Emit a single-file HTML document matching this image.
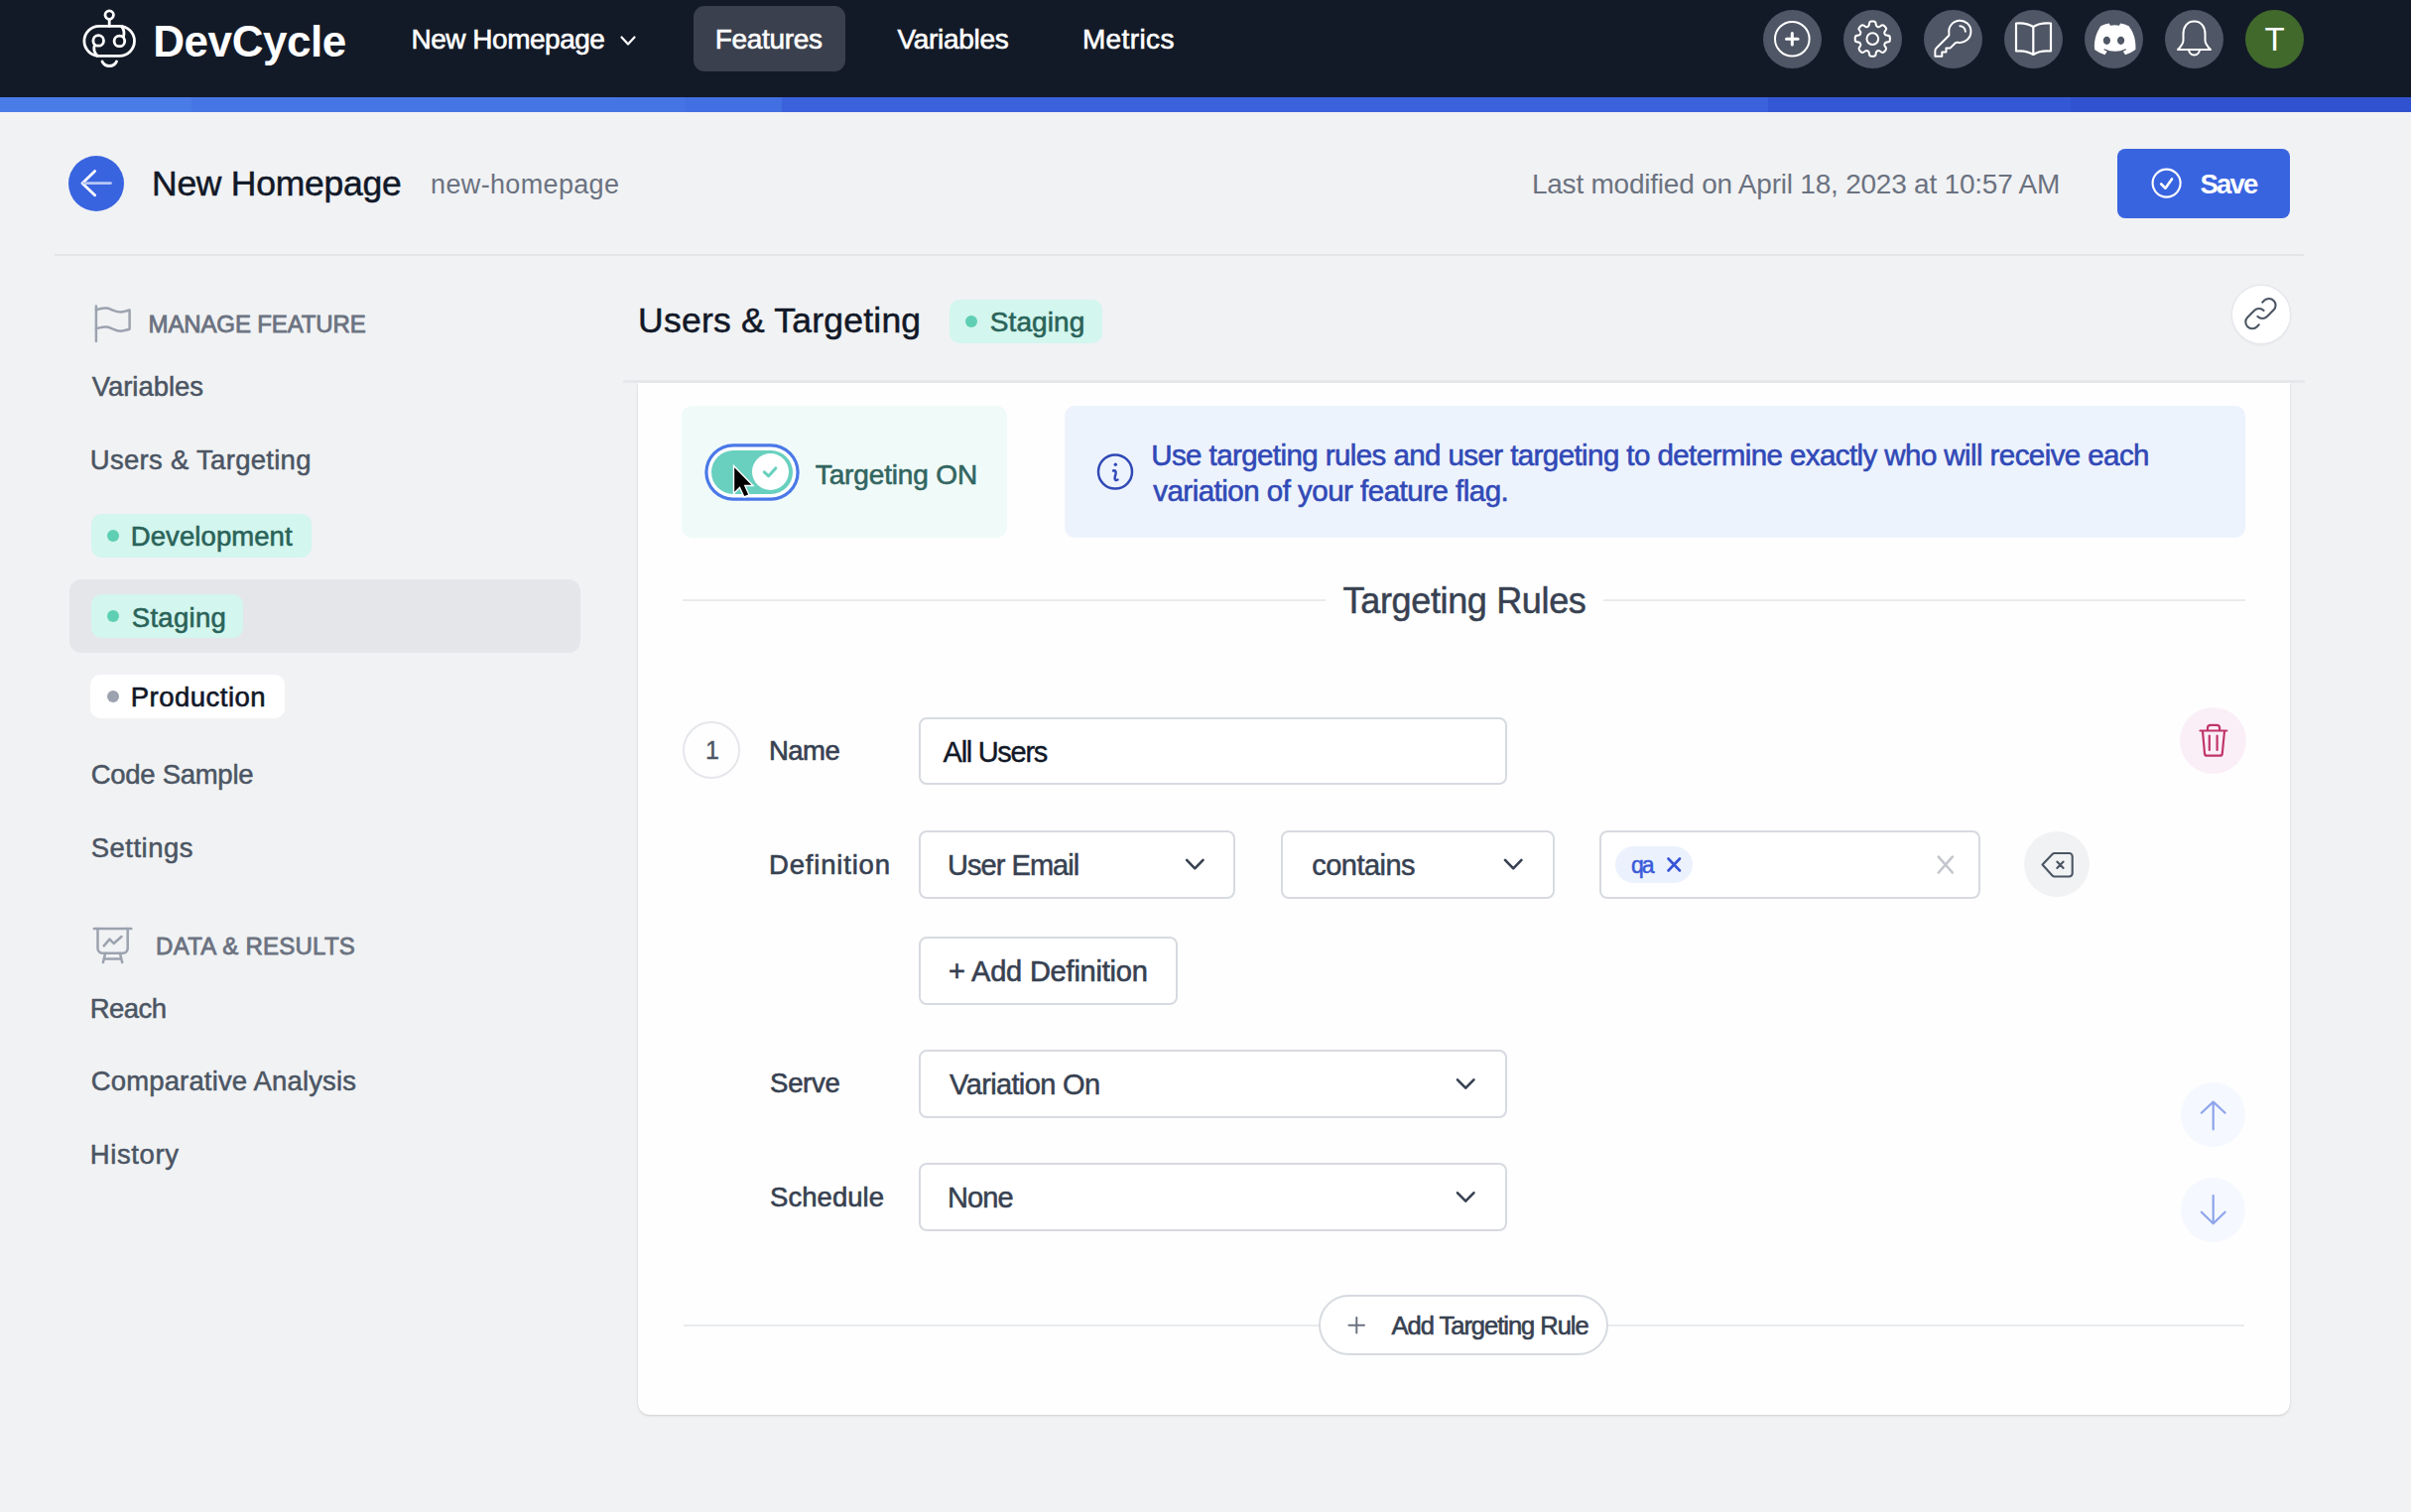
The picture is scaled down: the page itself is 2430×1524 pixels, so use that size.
<!DOCTYPE html>
<html><head><meta charset="utf-8"><style>
html,body{margin:0;padding:0;}
body{width:2430px;height:1524px;background:#f1f2f4;position:relative;overflow:hidden;font-family:"Liberation Sans",sans-serif;}
.a{position:absolute;box-sizing:border-box;}
.t{position:absolute;white-space:nowrap;}
svg{position:absolute;overflow:visible;}
</style></head><body>
<!-- NAV -->
<div class="a" style="left:0;top:0;width:2430px;height:98px;background:#131a27"></div>
<div class="a" style="left:0;top:98px;width:2430px;height:15px;background:linear-gradient(90deg,#4a7ce8 0,#4a7ce8 193px,#4676e5 193px,#4575e4 690px,#4270e2 690px,#4270e2 788px,#3b61dc 788px,#3b61dc 1782px,#3458d5 1782px,#3458d5 2087px,#3152d0 2087px)"></div>
<div class="a" style="left:699px;top:6px;width:153px;height:66px;border-radius:11px;background:#3a404d"></div>
<div class="a" style="left:1777px;top:9.5px;width:59px;height:59px;border-radius:50%;background:#4f5665"></div>
<div class="a" style="left:1858px;top:9.5px;width:59px;height:59px;border-radius:50%;background:#4f5665"></div>
<div class="a" style="left:1939px;top:9.5px;width:59px;height:59px;border-radius:50%;background:#4f5665"></div>
<div class="a" style="left:2020px;top:9.5px;width:59px;height:59px;border-radius:50%;background:#4f5665"></div>
<div class="a" style="left:2101px;top:9.5px;width:59px;height:59px;border-radius:50%;background:#4f5665"></div>
<div class="a" style="left:2182px;top:9.5px;width:59px;height:59px;border-radius:50%;background:#4f5665"></div>
<div class="a" style="left:2263px;top:9.5px;width:59px;height:59px;border-radius:50%;background:#41692c"></div>

<!-- HEADER -->
<div class="a" style="left:69px;top:156.6px;width:56px;height:56px;border-radius:50%;background:#3964e0"></div>
<div class="a" style="left:2134px;top:149.5px;width:174px;height:70px;border-radius:8px;background:#3964e0"></div>
<div class="a" style="left:55px;top:256px;width:2267px;height:2px;background:#e3e5e9"></div>

<!-- SIDEBAR -->
<div class="a" style="left:91.6px;top:518px;width:222.4px;height:44px;border-radius:10px;background:#d3f6ee"></div>
<div class="a" style="left:107.5px;top:534px;width:12px;height:12px;border-radius:50%;background:#5fcfb4"></div>
<div class="a" style="left:69.8px;top:584.3px;width:515px;height:74px;border-radius:12px;background:#e4e6ea"></div>
<div class="a" style="left:91.6px;top:599px;width:153.4px;height:44px;border-radius:10px;background:#d3f6ee"></div>
<div class="a" style="left:107.5px;top:615px;width:12px;height:12px;border-radius:50%;background:#5fcfb4"></div>
<div class="a" style="left:90.7px;top:680px;width:196.3px;height:44px;border-radius:10px;background:#ffffff"></div>
<div class="a" style="left:107.5px;top:696px;width:12px;height:12px;border-radius:50%;background:#9ca3af"></div>

<!-- MAIN HEADER -->
<div class="a" style="left:957px;top:302px;width:154px;height:43.5px;border-radius:10px;background:#d3f6ee"></div>
<div class="a" style="left:973px;top:318px;width:12px;height:12px;border-radius:50%;background:#5fcfb4"></div>
<div class="a" style="left:2250px;top:288px;width:58px;height:58px;border-radius:50%;background:#fff;box-shadow:0 0 0 1.5px #e6e8ec,0 2px 3px rgba(0,0,0,0.05)"></div>

<!-- CARD -->
<div class="a" style="left:628px;top:383px;width:1695px;height:3px;background:#e7e8eb;filter:blur(0.6px)"></div>
<div class="a" style="left:643px;top:386px;width:1665px;height:1040px;border-radius:0 0 12px 12px;background:#fefefe;box-shadow:0 1px 3px rgba(0,0,0,0.10),0 1px 2px rgba(0,0,0,0.06)"></div>

<div class="a" style="left:687.4px;top:409.3px;width:327.2px;height:132.7px;border-radius:10px;background:#f0fbf9"></div>
<div class="a" style="left:1072.9px;top:409.4px;width:1190.6px;height:132.2px;border-radius:10px;background:#edf3fd"></div>
<!-- toggle -->
<div class="a" style="left:716.9px;top:453.5px;width:82px;height:44.7px;border-radius:23px;background:#69d0bf;box-shadow:0 0 0 3.5px #fff,0 0 0 6.7px #4a78e8"></div>
<div class="a" style="left:757.7px;top:457.2px;width:37px;height:37px;border-radius:50%;background:#fff"></div>

<div class="a" style="left:688px;top:603.6px;width:648px;height:2px;background:#e9ebee"></div>
<div class="a" style="left:1615.6px;top:603.6px;width:647px;height:2px;background:#e9ebee"></div>

<!-- rule -->
<div class="a" style="left:688px;top:727px;width:58px;height:58px;border-radius:50%;border:2px solid #e5e7eb"></div>
<div class="a" style="left:925.8px;top:723.1px;width:593.5px;height:68.4px;border-radius:8px;border:2px solid #d7dae0;background:#fff"></div>
<div class="a" style="left:925.8px;top:837.4px;width:319.5px;height:68.3px;border-radius:8px;border:2px solid #d7dae0;background:#fff"></div>
<div class="a" style="left:1291px;top:837.2px;width:276px;height:69px;border-radius:8px;border:2px solid #d7dae0;background:#fff"></div>
<div class="a" style="left:1612px;top:837.2px;width:383.5px;height:69px;border-radius:8px;border:2px solid #d7dae0;background:#fff"></div>
<div class="a" style="left:1628.2px;top:853px;width:78.1px;height:36.7px;border-radius:19px;background:#ebf1fd"></div>
<div class="a" style="left:2040.3px;top:838.3px;width:66px;height:66px;border-radius:50%;background:#f1f2f4"></div>
<div class="a" style="left:2197.3px;top:712.9px;width:67px;height:67px;border-radius:50%;background:#fbeff7"></div>
<div class="a" style="left:925.8px;top:943.8px;width:261.2px;height:69px;border-radius:8px;border:2px solid #d7dae0;background:#fff"></div>
<div class="a" style="left:925.8px;top:1058px;width:593.5px;height:69px;border-radius:8px;border:2px solid #d7dae0;background:#fff"></div>
<div class="a" style="left:925.8px;top:1172.2px;width:593.5px;height:69px;border-radius:8px;border:2px solid #d7dae0;background:#fff"></div>
<div class="a" style="left:2198.3px;top:1090.7px;width:65px;height:65px;border-radius:50%;background:#f5f8fe"></div>
<div class="a" style="left:2198.3px;top:1187.1px;width:65px;height:65px;border-radius:50%;background:#f5f8fe"></div>
<div class="a" style="left:689px;top:1335px;width:1573px;height:2px;background:#e9ebee"></div>
<div class="a" style="left:1329.4px;top:1305px;width:292px;height:61.3px;border-radius:31px;border:2px solid #d7dae0;background:#fff"></div>

<!-- ICONS overlay -->
<svg style="left:0;top:0" width="2430" height="1524" viewBox="0 0 2430 1524" fill="none" stroke-linecap="round" stroke-linejoin="round">
 <!-- logo -->
 <g stroke="#fff" stroke-width="2.8">
  <circle cx="110.2" cy="15.1" r="4.2"/>
  <line x1="110.2" y1="19.5" x2="110.2" y2="26.3"/>
  <rect x="84.9" y="26.3" width="50.6" height="30" rx="15"/>
  <circle cx="99.2" cy="40.9" r="5.3"/>
  <circle cx="120.4" cy="41.4" r="5.3"/>
  <path d="M95.5 45 C 94 49, 95 53, 98 56.3"/>
  <path d="M124.5 37 C 125.5 33, 125 29.5, 122.5 26.5"/>
  <path d="M103 62 C 106 68, 114.5 68, 117.5 62"/>
 </g>
 <!-- nav chevron -->
 <path d="M626.5 37.5 L633 44.5 L639.5 37.5" stroke="#fff" stroke-width="2.2"/>
 <!-- plus circle -->
 <g stroke="#fff" stroke-width="2">
  <circle cx="1806.3" cy="39.2" r="17.3"/>
  <path d="M1806.3 33.4 V45 M1800.5 39.2 H1812.1" stroke-width="3"/>
 </g>
 <!-- gear -->
 <g stroke="#fff" stroke-width="1.05" transform="translate(1887.3 39.1) scale(1.95) translate(-12 -12)">
  <path d="M10.343 3.94c.09-.542.56-.94 1.11-.94h1.093c.55 0 1.02.398 1.11.94l.149.894c.07.424.384.764.78.93.398.164.855.142 1.205-.108l.737-.527a1.125 1.125 0 0 1 1.45.12l.773.774c.39.389.44 1.002.12 1.45l-.527.737c-.25.35-.272.806-.107 1.204.165.397.505.71.93.78l.893.15c.543.09.94.559.94 1.109v1.094c0 .55-.397 1.02-.94 1.11l-.894.149c-.424.07-.764.383-.929.78-.165.398-.143.854.107 1.204l.527.738c.32.447.269 1.06-.12 1.45l-.774.773a1.125 1.125 0 0 1-1.449.12l-.738-.527c-.35-.25-.806-.272-1.203-.107-.398.165-.71.505-.781.929l-.149.894c-.09.542-.56.94-1.11.94h-1.094c-.55 0-1.019-.398-1.11-.94l-.148-.894c-.071-.424-.384-.764-.781-.93-.398-.164-.854-.142-1.204.108l-.738.527c-.447.32-1.06.269-1.45-.12l-.773-.774a1.125 1.125 0 0 1-.12-1.45l.527-.737c.25-.35.272-.806.108-1.204-.165-.397-.506-.71-.93-.78l-.894-.15c-.542-.09-.94-.56-.94-1.109v-1.094c0-.55.398-1.02.94-1.11l.894-.149c.424-.07.765-.383.93-.78.165-.398.143-.854-.108-1.204l-.526-.738a1.125 1.125 0 0 1 .12-1.45l.773-.773a1.125 1.125 0 0 1 1.45-.12l.737.527c.35.25.807.272 1.204.107.397-.165.71-.505.78-.929l.15-.894Z"/>
  <path d="M15 12a3 3 0 1 1-6 0 3 3 0 0 1 6 0Z"/>
 </g>
 <!-- key -->
 <g stroke="#fff" stroke-width="1.08" transform="translate(1968.4 38.7) scale(1.85) translate(-12 -12)">
  <path d="M15.75 5.25a3 3 0 0 1 3 3m3 0a6 6 0 0 1-7.029 5.912c-.563-.097-1.159.026-1.563.43L10.5 17.25H8.25v2.25H6v2.25H2.25v-2.818c0-.597.237-1.17.659-1.591l6.499-6.499c.404-.404.527-1 .43-1.563A6 6 0 1 1 21.75 8.25Z"/>
 </g>
 <!-- book -->
 <g stroke="#fff" stroke-width="2.2">
  <path d="M2049.3 27 C 2044 23.5, 2037 23, 2032 23.5 V 51.5 C 2037 51, 2044 51.5, 2049.3 55 C 2054.5 51.5, 2061.5 51, 2067 51.5 V 23.5 C 2061.5 23, 2054.5 23.5, 2049.3 27 Z M2049.3 27 V 55"/>
 </g>
 <!-- discord -->
 <path fill="#fff" stroke="none" d="M2145.6 26.2 a34 34 0 0 0 -8.5 -2.7 l-1.1 2.2 a31 31 0 0 0 -9.1 0 l-1.1 -2.2 a34 34 0 0 0 -8.5 2.7 C 2111.9 34.3, 2110.4 42.2, 2111.1 50 a34 34 0 0 0 10.4 5.3 l2.2 -3.6 a22 22 0 0 1 -3.5 -1.7 l0.9 -0.7 a24.5 24.5 0 0 0 21.3 0 l0.9 0.7 a22 22 0 0 1 -3.5 1.7 l2.2 3.6 a34 34 0 0 0 10.4 -5.3 C 2152.9 41, 2150.9 33.1, 2145.6 26.2 Z M2123.4 44.9 c-2 0 -3.6 -1.9 -3.6 -4.1 c0 -2.3 1.6 -4.1 3.6 -4.1 c2 0 3.7 1.9 3.6 4.1 c0 2.3 -1.6 4.1 -3.6 4.1 Z M2137.6 44.9 c-2 0 -3.6 -1.9 -3.6 -4.1 c0 -2.3 1.6 -4.1 3.6 -4.1 c2 0 3.7 1.9 3.6 4.1 c0 2.3 -1.6 4.1 -3.6 4.1 Z"/>
 <!-- bell -->
 <g stroke="#fff" stroke-width="2">
  <path d="M2211.5 21.5 c-7.5 0 -11 6 -11 13 v 6 c 0 4 -3 7 -5.5 9.5 h 33 c -2.5 -2.5 -5.5 -5.5 -5.5 -9.5 v -6 c 0 -7 -3.5 -13 -11 -13 Z"/>
  <path d="M2206 50 a5.5 5.5 0 0 0 11 0"/>
 </g>
 <!-- back arrow -->
 <g stroke="#fff" stroke-width="2.8">
  <path d="M95.6 172.5 L83 184.7 L95.6 196.8"/>
  <path d="M84.5 184.7 H111.5" stroke="#b7c6f5"/>
 </g>
 <!-- save check -->
 <g stroke="#fff" stroke-width="2.1">
  <circle cx="2183.6" cy="184.6" r="14"/>
  <path d="M2178.2 185.5 L2182.5 189.7 L2189 180.4" stroke-width="2.6"/>
 </g>
 <!-- flag -->
 <g stroke="#9ca3af" stroke-width="2.5">
  <path d="M96.9 344 V308.6"/>
  <path d="M96.9 312.2 C 101 311, 104 310.4, 107 310.6 C 112 311, 116 314.6, 121.4 314.6 C 125 314.6, 128 313, 130.6 312.6 V 331.8 C 128 332.5, 125 333.7, 121.4 333.7 C 116 333.7, 112 329.8, 107 329.6 C 104 329.5, 101 330.3, 96.9 331.1"/>
 </g>
 <!-- chart -->
 <g stroke="#9ca3af" stroke-width="2.5" transform="translate(85 925)">
  <path d="M9.8 10.9 H47.3"/>
  <path d="M13.5 10.9 V31 a4.7 4.7 0 0 0 4.7 4.7 H39 a4.7 4.7 0 0 0 4.7 -4.7 V10.9"/>
  <path d="M21.1 36 L18.9 45.1 M36 36 L38.2 45.1 M20.2 41.4 H37"/>
  <path d="M19.7 28.4 L25.5 21.6 L29.6 26 L37.5 19"/>
 </g>
 <!-- link -->
 <g stroke="#4b5563" stroke-width="2.1" transform="translate(2278.5 316) scale(1.68) translate(-12 -12)">
  <path d="M13.828 10.172a4 4 0 00-5.656 0l-4 4a4 4 0 105.656 5.656l1.102-1.101m-.758-4.899a4 4 0 005.656 0l4-4a4 4 0 00-5.656-5.656l-1.1 1.1" stroke-width="1.25"/>
 </g>
 <!-- toggle check -->
 <path d="M770.3 475.9 L774.7 479.8 L781.8 472" stroke="#69d0bf" stroke-width="3.1"/>
 <!-- cursor -->
 <path d="M739.5 469.5 V497.5 L745.5 491.5 L750 501 L755 498.8 L750.8 489.5 H759 Z" fill="#000" stroke="#fff" stroke-width="1.4" stroke-linejoin="miter"/>
 <!-- info icon -->
 <g stroke="#3149b6" stroke-width="2.5">
  <circle cx="1124" cy="475.5" r="17"/>
  <path d="M1122 474.5 C1124 474 1125 475 1124.5 477.5 L1123.6 481.5 C1123.2 483.5 1124.5 484.5 1126.5 483.5"/>
 </g>
 <circle cx="1124.3" cy="468.3" r="1.7" fill="#3149b6"/>
 <!-- trash -->
 <g stroke="#c0356b" stroke-width="2.2" transform="translate(2190 705)">
  <path d="M27.5 31.5 H54.3"/>
  <path d="M35 31 V28.5 a2.8 2.8 0 0 1 2.8 -2.6 h6.5 a2.8 2.8 0 0 1 2.8 2.6 V31"/>
  <path d="M30 32 L32 54.5 a2.5 2.5 0 0 0 2.5 2.2 h12.8 a2.5 2.5 0 0 0 2.5 -2.2 L52 32"/>
  <path d="M36.8 36.5 V51 M44.6 36.5 V51"/>
 </g>
 <!-- chevrons -->
 <g stroke="#374151" stroke-width="2.6">
  <path d="M1196.1 866.9 L1204.3 875.3 L1212.5 866.9"/>
  <path d="M1517 866.9 L1525.2 875.3 L1533.4 866.9"/>
  <path d="M1469 1088.3 L1477.2 1096.7 L1485.4 1088.3"/>
  <path d="M1469 1202.3 L1477.2 1210.7 L1485.4 1202.3"/>
 </g>
 <!-- chip x -->
 <path d="M1681.5 865.5 L1693 877.5 M1693 865.5 L1681.5 877.5" stroke="#3553d6" stroke-width="2.6"/>
 <!-- clear x -->
 <path d="M1953.8 863.6 L1967.8 879.5 M1967.8 863.6 L1953.8 879.5" stroke="#c3c6cc" stroke-width="2.6"/>
 <!-- backspace -->
 <g stroke="#4b5563" stroke-width="2.1" transform="translate(1930 830)">
  <path d="M128.5 41.5 L138.5 31 a3 3 0 0 1 2.2 -1 H155.5 a3.2 3.2 0 0 1 3.2 3.2 V50.3 a3.2 3.2 0 0 1 -3.2 3.2 H140.7 a3 3 0 0 1 -2.2 -1 Z"/>
  <path d="M143.3 38.5 L149.6 45 M149.6 38.5 L143.3 45"/>
 </g>
 <!-- plus add rule -->
 <path d="M1367.3 1328 V1343.5 M1359.5 1335.7 H1375" stroke="#6b7280" stroke-width="2"/>
 <!-- arrows -->
 <g stroke="#8ea5ec" stroke-width="2.2">
  <path d="M2230.7 1111 V1138.3 M2218.8 1121.7 L2230.7 1110.6 L2242.6 1121.7"/>
  <path d="M2230.7 1205 V1233 M2218.8 1221.7 L2230.7 1233.3 L2242.6 1221.7"/>
 </g>
</svg>
<div class="t" style="left:2282.5px;top:23px;font-size:33px;line-height:33px;color:#fff">T</div>

<div id="t_logo" class="t" style="left:154.3px;top:19.9px;font-size:44px;line-height:44px;font-weight:700;color:#ffffff;letter-spacing:-0.46px;">DevCycle</div>
<div id="t_proj" class="t" style="left:414.5px;top:26.3px;font-size:28px;line-height:28px;font-weight:400;color:#ffffff;letter-spacing:-0.49px;-webkit-text-stroke:0.6px #fff;">New Homepage</div>
<div id="t_feat" class="t" style="left:720.7px;top:26.1px;font-size:28px;line-height:28px;font-weight:400;color:#ffffff;letter-spacing:-0.30px;-webkit-text-stroke:0.6px #fff;">Features</div>
<div id="t_vars" class="t" style="left:904.5px;top:26.1px;font-size:28px;line-height:28px;font-weight:400;color:#ffffff;letter-spacing:-0.30px;-webkit-text-stroke:0.6px #fff;">Variables</div>
<div id="t_metr" class="t" style="left:1090.9px;top:26.1px;font-size:28px;line-height:28px;font-weight:400;color:#ffffff;letter-spacing:0.40px;-webkit-text-stroke:0.6px #fff;">Metrics</div>
<div id="t_h1" class="t" style="left:153.0px;top:168.1px;font-size:35.5px;line-height:35.5px;font-weight:400;color:#111827;letter-spacing:-0.26px;-webkit-text-stroke:0.5px #111827;">New Homepage</div>
<div id="t_slug" class="t" style="left:434.1px;top:172.7px;font-size:27px;line-height:27px;font-weight:400;color:#6b7280;letter-spacing:0.34px;">new-homepage</div>
<div id="t_mod" class="t" style="left:1543.9px;top:171.9px;font-size:28px;line-height:28px;font-weight:400;color:#6b7280;letter-spacing:-0.22px;">Last modified on April 18, 2023 at 10:57 AM</div>
<div id="t_save" class="t" style="left:2217.5px;top:172.1px;font-size:27.5px;line-height:27.5px;font-weight:700;color:#ffffff;letter-spacing:-1.82px;">Save</div>
<div id="t_mf" class="t" style="left:149.6px;top:315.0px;font-size:24px;line-height:24px;font-weight:400;color:#6b7280;letter-spacing:-0.14px;-webkit-text-stroke:0.8px #6b7280;">MANAGE FEATURE</div>
<div id="t_sv" class="t" style="left:92.8px;top:376.0px;font-size:27.5px;line-height:27.5px;font-weight:400;color:#4b5563;letter-spacing:-0.06px;-webkit-text-stroke:0.5px #4b5563;">Variables</div>
<div id="t_sut" class="t" style="left:90.8px;top:450.2px;font-size:27.5px;line-height:27.5px;font-weight:400;color:#4b5563;letter-spacing:0.29px;-webkit-text-stroke:0.5px #4b5563;">Users &amp; Targeting</div>
<div id="t_dev" class="t" style="left:131.8px;top:527.3px;font-size:27.5px;line-height:27.5px;font-weight:400;color:#2a6359;letter-spacing:0.08px;-webkit-text-stroke:0.6px #2a6359;">Development</div>
<div id="t_stg" class="t" style="left:132.8px;top:608.7px;font-size:27.5px;line-height:27.5px;font-weight:400;color:#2a6359;letter-spacing:0.28px;-webkit-text-stroke:0.6px #2a6359;">Staging</div>
<div id="t_prod" class="t" style="left:131.8px;top:689.3px;font-size:27.5px;line-height:27.5px;font-weight:400;color:#111827;letter-spacing:0.48px;-webkit-text-stroke:0.6px #111827;">Production</div>
<div id="t_code" class="t" style="left:91.7px;top:766.5px;font-size:27.5px;line-height:27.5px;font-weight:400;color:#4b5563;letter-spacing:-0.28px;-webkit-text-stroke:0.5px #4b5563;">Code Sample</div>
<div id="t_set" class="t" style="left:91.7px;top:841.1px;font-size:27.5px;line-height:27.5px;font-weight:400;color:#4b5563;letter-spacing:0.49px;-webkit-text-stroke:0.5px #4b5563;">Settings</div>
<div id="t_dr" class="t" style="left:157.1px;top:941.5px;font-size:24px;line-height:24px;font-weight:400;color:#6b7280;letter-spacing:0.26px;-webkit-text-stroke:0.8px #6b7280;">DATA &amp; RESULTS</div>
<div id="t_reach" class="t" style="left:90.7px;top:1003.0px;font-size:27.5px;line-height:27.5px;font-weight:400;color:#4b5563;letter-spacing:-0.53px;-webkit-text-stroke:0.5px #4b5563;">Reach</div>
<div id="t_comp" class="t" style="left:91.7px;top:1075.9px;font-size:27.5px;line-height:27.5px;font-weight:400;color:#4b5563;letter-spacing:0.15px;-webkit-text-stroke:0.5px #4b5563;">Comparative Analysis</div>
<div id="t_hist" class="t" style="left:90.7px;top:1149.9px;font-size:27.5px;line-height:27.5px;font-weight:400;color:#4b5563;letter-spacing:0.64px;-webkit-text-stroke:0.5px #4b5563;">History</div>
<div id="t_ut" class="t" style="left:643.1px;top:305.6px;font-size:35.5px;line-height:35.5px;font-weight:400;color:#111827;letter-spacing:0.22px;-webkit-text-stroke:0.5px #111827;">Users &amp; Targeting</div>
<div id="t_badge" class="t" style="left:997.8px;top:311.2px;font-size:28px;line-height:28px;font-weight:400;color:#2a6359;letter-spacing:0.09px;-webkit-text-stroke:0.6px #2a6359;">Staging</div>
<div id="t_ton" class="t" style="left:821.8px;top:464.6px;font-size:28px;line-height:28px;font-weight:400;color:#326560;letter-spacing:-0.14px;-webkit-text-stroke:0.6px #326560;">Targeting ON</div>
<div id="t_info1" class="t" style="left:1160.2px;top:443.9px;font-size:29.5px;line-height:29.5px;font-weight:400;color:#3149b6;letter-spacing:-0.58px;-webkit-text-stroke:0.6px #3149b6;">Use targeting rules and user targeting to determine exactly who will receive each</div>
<div id="t_info2" class="t" style="left:1162.2px;top:480.0px;font-size:29.5px;line-height:29.5px;font-weight:400;color:#3149b6;letter-spacing:-0.51px;-webkit-text-stroke:0.6px #3149b6;">variation of your feature flag.</div>
<div id="t_tr" class="t" style="left:1353.6px;top:588.4px;font-size:36px;line-height:36px;font-weight:400;color:#374151;letter-spacing:-0.35px;-webkit-text-stroke:0.5px #374151;">Targeting Rules</div>
<div id="t_one" class="t" style="left:711.0px;top:744.1px;font-size:25px;line-height:25px;font-weight:400;color:#4b5563;letter-spacing:0.00px;-webkit-text-stroke:0.4px #4b5563;">1</div>
<div id="t_name" class="t" style="left:775.1px;top:743.1px;font-size:27.5px;line-height:27.5px;font-weight:400;color:#374151;letter-spacing:-0.58px;-webkit-text-stroke:0.6px #374151;">Name</div>
<div id="t_allu" class="t" style="left:950.6px;top:743.7px;font-size:29px;line-height:29px;font-weight:400;color:#111827;letter-spacing:-1.29px;-webkit-text-stroke:0.4px #111827;">All Users</div>
<div id="t_def" class="t" style="left:775.1px;top:857.7px;font-size:27.5px;line-height:27.5px;font-weight:400;color:#374151;letter-spacing:0.80px;-webkit-text-stroke:0.6px #374151;">Definition</div>
<div id="t_ue" class="t" style="left:955.1px;top:857.6px;font-size:29px;line-height:29px;font-weight:400;color:#374151;letter-spacing:-0.97px;-webkit-text-stroke:0.5px #374151;">User Email</div>
<div id="t_cont" class="t" style="left:1322.2px;top:857.6px;font-size:29px;line-height:29px;font-weight:400;color:#374151;letter-spacing:-0.52px;-webkit-text-stroke:0.5px #374151;">contains</div>
<div id="t_qa" class="t" style="left:1644.0px;top:860.6px;font-size:23px;line-height:23px;font-weight:400;color:#3a5ad9;letter-spacing:-2.03px;-webkit-text-stroke:0.5px #3a5ad9;">qa</div>
<div id="t_adddef" class="t" style="left:956.1px;top:964.7px;font-size:29px;line-height:29px;font-weight:400;color:#374151;letter-spacing:-0.21px;-webkit-text-stroke:0.6px #374151;">+ Add Definition</div>
<div id="t_serve" class="t" style="left:776.1px;top:1078.4px;font-size:27.5px;line-height:27.5px;font-weight:400;color:#374151;letter-spacing:-0.31px;-webkit-text-stroke:0.6px #374151;">Serve</div>
<div id="t_var" class="t" style="left:957.1px;top:1079.3px;font-size:29px;line-height:29px;font-weight:400;color:#374151;letter-spacing:-0.64px;-webkit-text-stroke:0.5px #374151;">Variation On</div>
<div id="t_sched" class="t" style="left:776.1px;top:1192.6px;font-size:27.5px;line-height:27.5px;font-weight:400;color:#374151;letter-spacing:0.04px;-webkit-text-stroke:0.6px #374151;">Schedule</div>
<div id="t_none" class="t" style="left:955.1px;top:1193.2px;font-size:29px;line-height:29px;font-weight:400;color:#374151;letter-spacing:-0.97px;-webkit-text-stroke:0.5px #374151;">None</div>
<div id="t_atr" class="t" style="left:1402.6px;top:1323.8px;font-size:25.5px;line-height:25.5px;font-weight:400;color:#374151;letter-spacing:-1.02px;-webkit-text-stroke:0.6px #374151;">Add Targeting Rule</div>
</body></html>
